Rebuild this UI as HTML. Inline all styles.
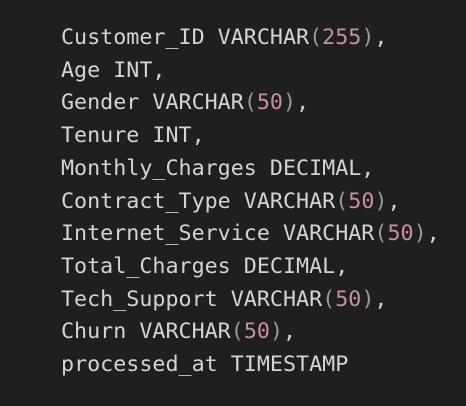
<!DOCTYPE html>
<html><head><style>
html,body{margin:0;padding:0;background:#1f1f1f;width:466px;height:406px;overflow:hidden}
pre{margin:0;position:absolute;left:61px;top:22px;font-family:"DejaVu Sans Mono","Liberation Mono",monospace;font-size:21.7px;line-height:32.7px;color:#d4d4d4}
.p{color:#9a9a9a}.n{color:#c8909b}
</style></head><body>
<pre>Customer_ID VARCHAR<span class="p">(</span><span class="n">255</span><span class="p">)</span>,
Age INT,
Gender VARCHAR<span class="p">(</span><span class="n">50</span><span class="p">)</span>,
Tenure INT,
Monthly_Charges DECIMAL,
Contract_Type VARCHAR<span class="p">(</span><span class="n">50</span><span class="p">)</span>,
Internet_Service VARCHAR<span class="p">(</span><span class="n">50</span><span class="p">)</span>,
Total_Charges DECIMAL,
Tech_Support VARCHAR<span class="p">(</span><span class="n">50</span><span class="p">)</span>,
Churn VARCHAR<span class="p">(</span><span class="n">50</span><span class="p">)</span>,
processed_at TIMESTAMP</pre>
</body></html>
